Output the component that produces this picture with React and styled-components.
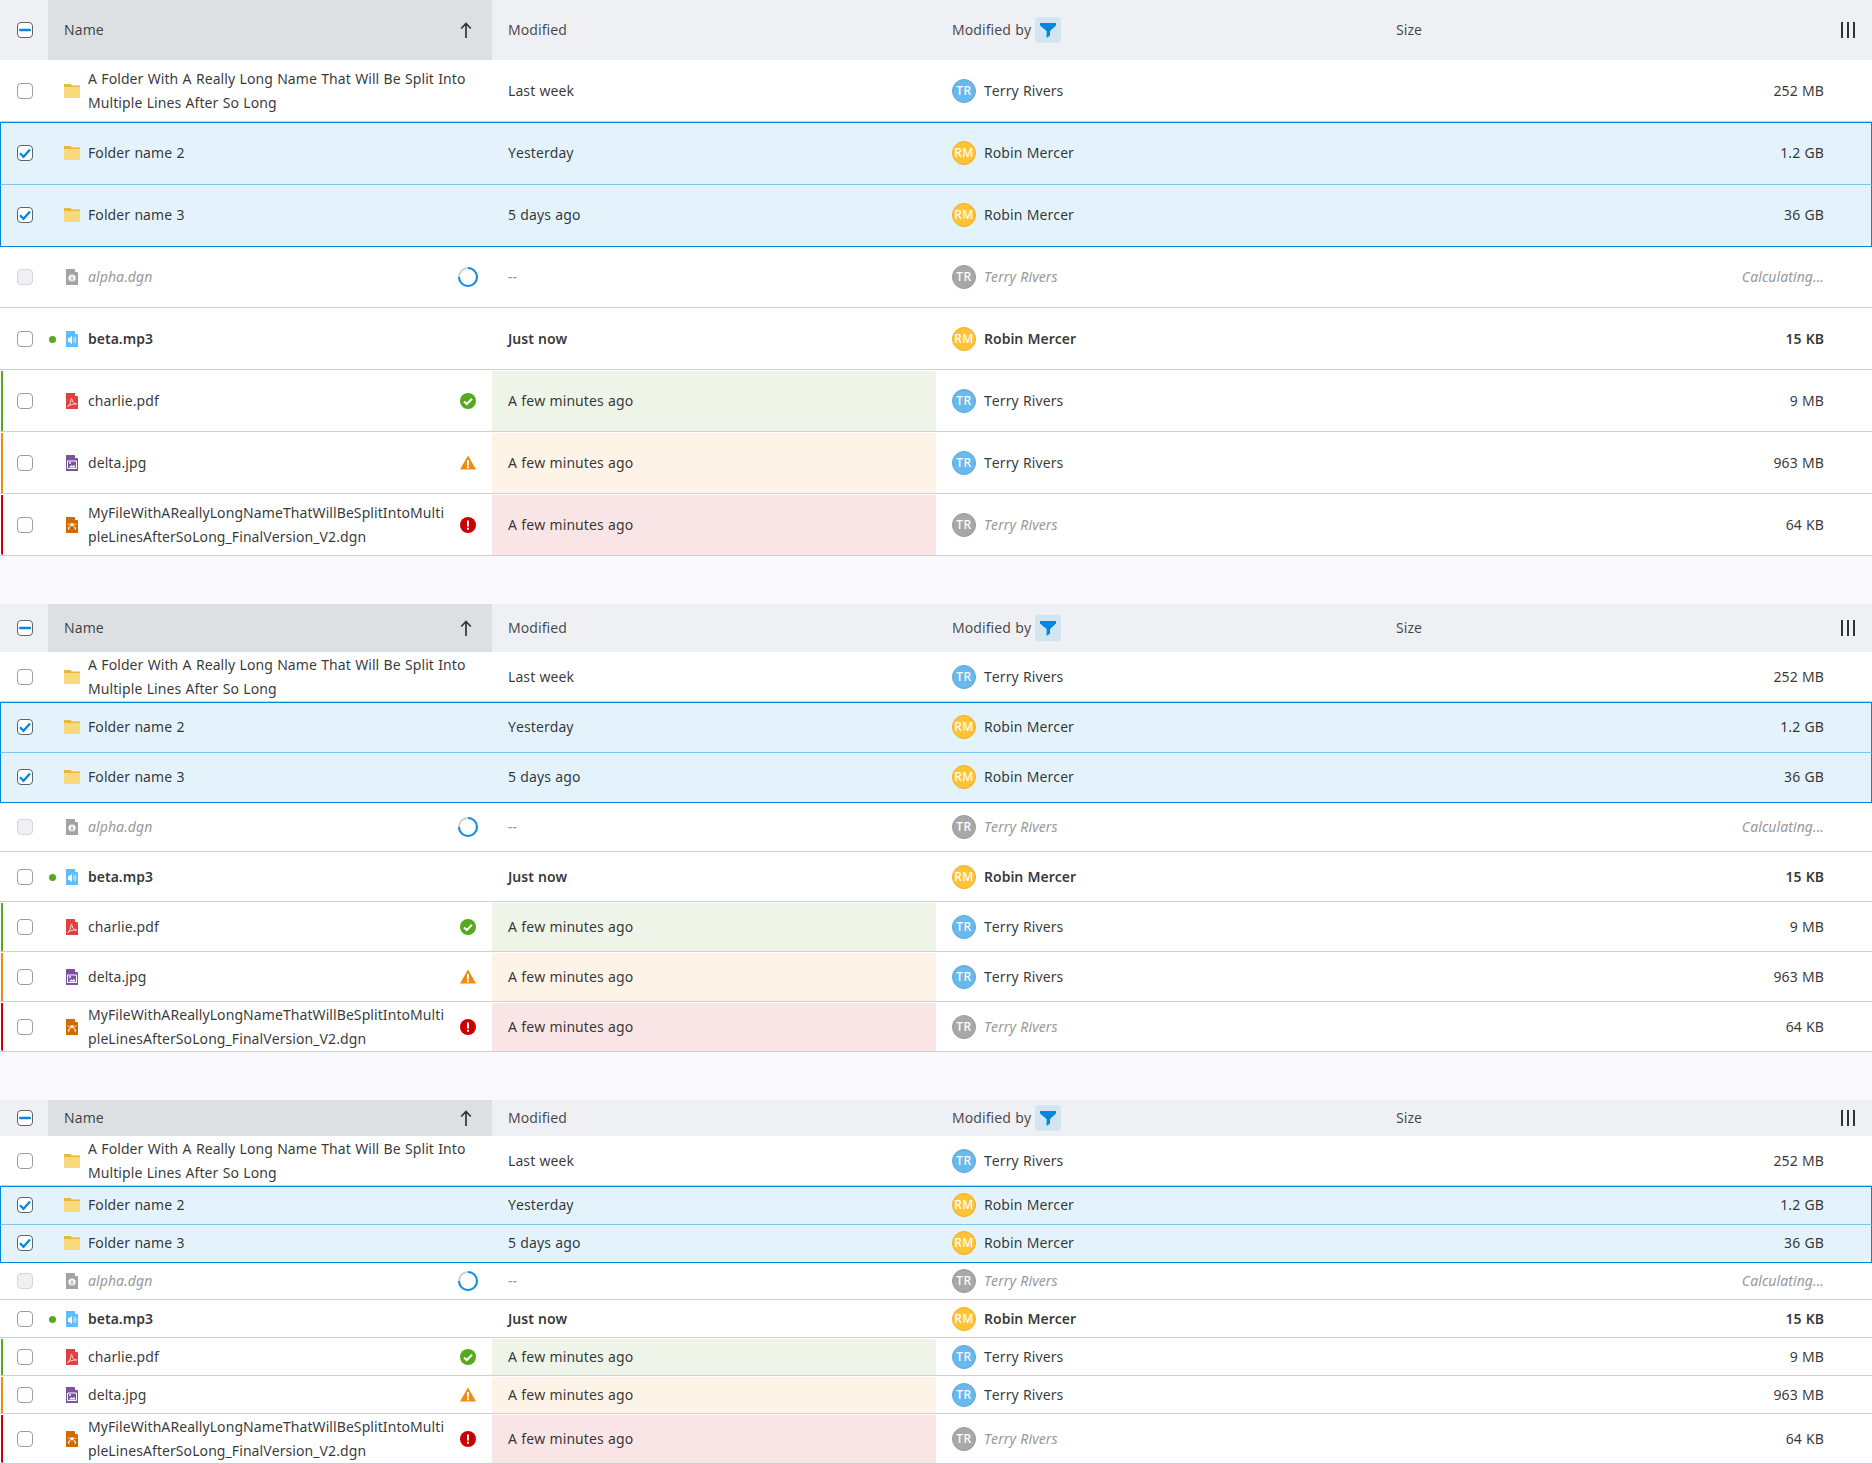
import React from 'react';
import styled, { createGlobalStyle, css } from 'styled-components';

const GlobalStyle = createGlobalStyle`
  * { box-sizing: border-box; }
  html, body { margin: 0; padding: 0; background: #f9f9fb; }
  body {
    font-family: "Noto Sans", "Open Sans", sans-serif;
    font-size: 14px;
    line-height: 24px;
    font-kerning: none;
    letter-spacing: 0.08px;
    word-spacing: 0.55px;
    color: rgba(0, 0, 0, 0.8);
  }
`;

const BLUE = '#0087e0';
const GRID = '48px 444px 444px 444px 444px 48px';

const statusColors = {
  positive: { bar: '#56a91c', tint: '#eef5e8' },
  warning: { bar: '#f18b12', tint: '#fdf3e7' },
  negative: { bar: '#cc0000', tint: '#f9e5e5' },
};

const Page = styled.div`
  display: flex;
  flex-direction: column;
  gap: 48px;
`;

const Table = styled.div`
  display: flex;
  flex-direction: column;
`;

const HeaderRow = styled.div`
  display: grid;
  grid-template-columns: ${GRID};
  height: ${(p) => p.$height}px;
  background: #eef0f3;
  border-radius: 3px 3px 0 0;
  color: rgba(0, 0, 0, 0.72);
`;

const HeaderCell = styled.div`
  display: flex;
  align-items: center;
  padding-left: 16px;
  background: ${(p) => (p.$sorted ? '#dce0e3' : 'transparent')};
`;

const SortIcon = styled.svg`
  width: 16px;
  height: 16px;
  margin-left: auto;
  margin-right: 18px;
`;

const FilterButton = styled.span`
  display: flex;
  align-items: center;
  justify-content: center;
  width: 26px;
  height: 26px;
  margin-left: 4px;
  border-radius: 3px;
  background: #d4e5f2;
`;

const ColumnsCell = styled.div`
  display: flex;
  align-items: center;
  justify-content: center;
`;

const Row = styled.div`
  position: relative;
  display: grid;
  grid-template-columns: ${GRID};
  min-height: ${(p) => p.$height}px;
  padding-top: 1px;
  background: #fff;
  border-bottom: 1px solid #cdd0d4;

  ${(p) =>
    p.$selected &&
    css`
      z-index: 1;
      background: #e4f3fb;
      border-bottom-color: #e4f3fb;
      &::after {
        content: '';
        position: absolute;
        inset: 0 0 -2px;
        pointer-events: none;
        border-left: 1px solid ${BLUE};
        border-right: 1px solid ${BLUE};
        border-top: 1px solid ${p.$first ? BLUE : '#7cc5f3'};
        border-bottom: ${p.$last ? `1px solid ${BLUE}` : 'none'};
      }
    `}

  ${(p) =>
    p.$status &&
    css`
      &::before {
        content: '';
        position: absolute;
        top: 1px;
        bottom: 0;
        left: 1px;
        width: 2px;
        background: ${statusColors[p.$status].bar};
        border-bottom-left-radius: ${p.$status === 'negative' ? '2px' : '0'};
      }
    `}
`;

const CheckCell = styled.div`
  display: flex;
  align-items: center;
  padding-left: 17px;
`;

const Box = styled.span`
  display: flex;
  align-items: center;
  justify-content: center;
  width: 16px;
  height: 16px;
  border-radius: 4px;
  border: 1px solid ${(p) => (p.$disabled ? '#d5d8dc' : p.$on ? '#5f6469' : '#9a9ea2')};
  background: ${(p) => (p.$disabled ? '#eef0f3' : '#fff')};
`;

const NameCell = styled.div`
  position: relative;
  display: flex;
  align-items: center;
  gap: 8px;
  padding: 0 16px;
`;

const NewDot = styled.span`
  position: absolute;
  left: 1px;
  top: 50%;
  width: 7px;
  height: 7px;
  margin-top: -3.5px;
  border-radius: 50%;
  background: #56a91c;
`;

const IconSlot = styled.span`
  display: flex;
  flex: none;
  justify-content: center;
  width: 16px;
`;

const NameText = styled.span`
  flex: 1;
  min-width: 0;
  overflow-wrap: anywhere;
  ${(p) => p.$muted && 'font-style: italic; color: #999;'}
  ${(p) => p.$bold && 'font-weight: 600; letter-spacing: 0;'}
`;

const Spinner = styled.svg`
  flex: none;
  width: 20px;
  height: 20px;
  margin-right: -2px;
`;

const StatusSvg = styled.svg`
  flex: none;
  width: 16px;
  height: 16px;
`;

const Cell = styled.div`
  display: flex;
  align-items: center;
  gap: 8px;
  padding-left: 16px;
  background: ${(p) => (p.$status ? statusColors[p.$status].tint : 'transparent')};
  ${(p) => p.$muted && 'font-style: italic; color: #999;'}
  ${(p) => p.$bold && 'font-weight: 600; letter-spacing: 0;'}
`;

const SizeCell = styled(Cell)`
  justify-content: flex-end;
`;

const Avatar = styled.span`
  display: flex;
  flex: none;
  align-items: center;
  justify-content: center;
  width: 24px;
  height: 24px;
  border-radius: 50%;
  font-size: 12px;
  font-style: normal;
  font-weight: 500;
  letter-spacing: 0.5px;
  color: #fff;
  background: ${(p) => p.$bg};
  border: 1px solid ${(p) => p.$edge};
`;

const people = {
  TR: { name: 'Terry Rivers', bg: '#6ab9ec', edge: '#5ca9dc' },
  RM: { name: 'Robin Mercer', bg: '#ffc335', edge: '#eeb126' },
};

const Check = ({ state, disabled }) => (
  <Box $on={state !== 'off'} $disabled={disabled}>
    {state === 'mixed' && (
      <svg width="12" height="12" viewBox="0 0 12 12">
        <rect x="0" y="4.75" width="12" height="2.5" rx="1" fill={BLUE} />
      </svg>
    )}
    {state === 'on' && (
      <svg width="12" height="12" viewBox="0 0 12 12">
        <path d="M1 6.2 4.5 9.8 11 2.5" fill="none" stroke={BLUE} strokeWidth="2.2" />
      </svg>
    )}
  </Box>
);

const SortUp = () => (
  <SortIcon viewBox="0 0 16 16">
    <path d="M8 1.5V16M3.2 6.5 8 1.5l4.8 5" fill="none" stroke="#333" strokeWidth="1.7" />
  </SortIcon>
);

const FunnelIcon = () => (
  <svg width="16" height="16" viewBox="0 0 16 16">
    <path d="M0 1h16v2.4L10 9v4.6L6.6 16V9L0 3.4z" fill={BLUE} />
  </svg>
);

const ColumnsIcon = () => (
  <svg width="16" height="16" viewBox="0 0 16 16">
    <path d="M1 0h2v16H1zM7 0h2v16H7zM13 0h2v16h-2z" fill="#333" />
  </svg>
);

const FolderIcon = () => (
  <svg width="16" height="14" viewBox="0 0 16 14">
    <path d="M0 0h6.5L8 1.5h8V4H0z" fill="#e8b73b" />
    <path d="M0 3h16v11H0z" fill="#f8d97c" />
  </svg>
);

const FileIcon = ({ color, fold, children }) => (
  <svg width="12" height="16" viewBox="0 0 12 16">
    <path d="M0 0h8.5L12 3.5V16H0z" fill={color} />
    <path d="M9 0l3 3H9z" fill={fold} />
    {children}
  </svg>
);

const fileIcons = {
  dgnPending: (
    <FileIcon color="#a3a3a3" fold="#fff">
      <circle cx="6" cy="9" r="3.6" fill="#fff" />
      <path d="M6 6.5v3.4M4.6 8.6 6 10.1l1.4-1.5M4.4 11h3.2" fill="none" stroke="#a3a3a3" strokeWidth="0.9" />
    </FileIcon>
  ),
  mp3: (
    <FileIcon color="#5ebcff" fold="#fff">
      <path d="M2 7h1.6L6 4.8v8.4L3.6 11H2z" fill="#fff" />
      <path d="M7.4 6.8c1 1.3 1 3.1 0 4.4M8.8 5.6c1.5 2 1.5 4.8 0 6.8" fill="none" stroke="#fff" strokeWidth="0.8" />
    </FileIcon>
  ),
  pdf: (
    <FileIcon color="#e04040" fold="#fff">
      <path
        d="M1.6 13.4c1.8-1 3.2-3.6 3.4-7 0-1.4.9-1.4 1 0 .2 2.6 2 4.6 4.6 4.6-2.8-.2-6.6.6-9 2.4z"
        fill="none"
        stroke="#fff"
        strokeWidth="0.8"
      />
    </FileIcon>
  ),
  jpg: (
    <FileIcon color="#7b529e" fold="#fff">
      <path d="M1.5 6h9v7.5h-9z" fill="none" stroke="#fff" strokeWidth="1" />
      <circle cx="4" cy="8" r="0.9" fill="#fff" />
      <path d="M3 12.5l2.2-2.2 1.3 1 1.6-1.6 1.4 2.8z" fill="#fff" />
    </FileIcon>
  ),
  dgn: (
    <FileIcon color="#d36c00" fold="#fff">
      <path d="M2.6 11.4C3 7.6 9 7.6 9.4 11.4" fill="none" stroke="#fff" strokeWidth="1" />
      <path d="M1.8 7.2h8.4" stroke="#fff" strokeWidth="0.7" />
      <path d="M4.8 6.4h2.4v1.6H4.8zM2 10.8h1.4v1.6H2zM8.6 10.8H10v1.6H8.6z" fill="#fff" />
    </FileIcon>
  ),
};

const ProgressSpinner = () => (
  <Spinner viewBox="0 0 20 20">
    <circle cx="10" cy="10" r="9" fill="none" stroke="#ccd0d4" strokeWidth="2" />
    <path d="M10 1a9 9 0 1 1-9 9" fill="none" stroke="#0f8fe3" strokeWidth="2" />
  </Spinner>
);

const SuccessIcon = () => (
  <StatusSvg viewBox="0 0 16 16">
    <circle cx="8" cy="8" r="8" fill="#56a91c" />
    <path d="M4 8.4l2.8 2.6L12 5.8" fill="none" stroke="#fff" strokeWidth="2" />
  </StatusSvg>
);

const WarningIcon = () => (
  <StatusSvg viewBox="0 0 16 16">
    <path d="M8 .4 16 14.6H0z" fill="#f18b12" />
    <path d="M7 5h2v5.4H7zM7 11.2h2v2H7z" fill="#fff" />
  </StatusSvg>
);

const ErrorIcon = () => (
  <StatusSvg viewBox="0 0 16 16">
    <circle cx="8" cy="8" r="8" fill="#cc0000" />
    <path d="M7 3.4h2v6.2H7zM7 10.8h2v2H7z" fill="#fff" />
  </StatusSvg>
);

const trailing = {
  busy: <ProgressSpinner />,
  positive: <SuccessIcon />,
  warning: <WarningIcon />,
  negative: <ErrorIcon />,
};

const rows = [
  { name: 'A Folder With A Really Long Name That Will Be Split Into Multiple Lines After So Long', folder: true, modified: 'Last week', by: 'TR', size: '252 MB' },
  { name: 'Folder name 2', folder: true, modified: 'Yesterday', by: 'RM', size: '1.2 GB', selected: true, first: true },
  { name: 'Folder name 3', folder: true, modified: '5 days ago', by: 'RM', size: '36 GB', selected: true, last: true },
  { name: 'alpha.dgn', icon: 'dgnPending', modified: '--', by: 'TR', size: 'Calculating...', disabled: true, trail: 'busy' },
  { name: 'beta.mp3', icon: 'mp3', modified: 'Just now', by: 'RM', size: '15 KB', bold: true },
  { name: 'charlie.pdf', icon: 'pdf', modified: 'A few minutes ago', by: 'TR', size: '9 MB', status: 'positive', trail: 'positive' },
  { name: 'delta.jpg', icon: 'jpg', modified: 'A few minutes ago', by: 'TR', size: '963 MB', status: 'warning', trail: 'warning' },
  { name: 'MyFileWithAReallyLongNameThatWillBeSplitIntoMultipleLinesAfterSoLong_FinalVersion_V2.dgn', icon: 'dgn', modified: 'A few minutes ago', by: 'TR', size: '64 KB', status: 'negative', trail: 'negative', mutedBy: true },
];

const TableRow = ({ row, height }) => {
  const person = people[row.by];
  const greyBy = row.disabled || row.mutedBy;
  return (
    <Row $height={height} $selected={row.selected} $first={row.first} $last={row.last} $status={row.status}>
      <CheckCell>
        <Check state={row.selected ? 'on' : 'off'} disabled={row.disabled} />
      </CheckCell>
      <NameCell>
        {row.bold && <NewDot />}
        <IconSlot>{row.folder ? <FolderIcon /> : fileIcons[row.icon]}</IconSlot>
        <NameText $muted={row.disabled} $bold={row.bold}>{row.name}</NameText>
        {row.trail && trailing[row.trail]}
      </NameCell>
      <Cell $status={row.status} $muted={row.disabled} $bold={row.bold}>{row.modified}</Cell>
      <Cell $muted={greyBy} $bold={row.bold}>
        <Avatar $bg={greyBy ? '#a8a8a8' : person.bg} $edge={greyBy ? '#9a9a9a' : person.edge}>{row.by}</Avatar>
        {person.name}
      </Cell>
      <SizeCell $muted={row.disabled} $bold={row.bold}>{row.size}</SizeCell>
      <div />
    </Row>
  );
};

const FileTable = ({ headerHeight, rowHeight }) => (
  <Table>
    <HeaderRow $height={headerHeight}>
      <CheckCell>
        <Check state="mixed" />
      </CheckCell>
      <HeaderCell $sorted>
        Name
        <SortUp />
      </HeaderCell>
      <HeaderCell>Modified</HeaderCell>
      <HeaderCell>
        Modified by
        <FilterButton>
          <FunnelIcon />
        </FilterButton>
      </HeaderCell>
      <HeaderCell>Size</HeaderCell>
      <ColumnsCell>
        <ColumnsIcon />
      </ColumnsCell>
    </HeaderRow>
    {rows.map((row) => (
      <TableRow key={row.name} row={row} height={rowHeight} />
    ))}
  </Table>
);

export default function App() {
  return (
    <>
      <GlobalStyle />
      <Page>
        <FileTable headerHeight={60} rowHeight={62} />
        <FileTable headerHeight={48} rowHeight={50} />
        <FileTable headerHeight={36} rowHeight={38} />
      </Page>
    </>
  );
}
